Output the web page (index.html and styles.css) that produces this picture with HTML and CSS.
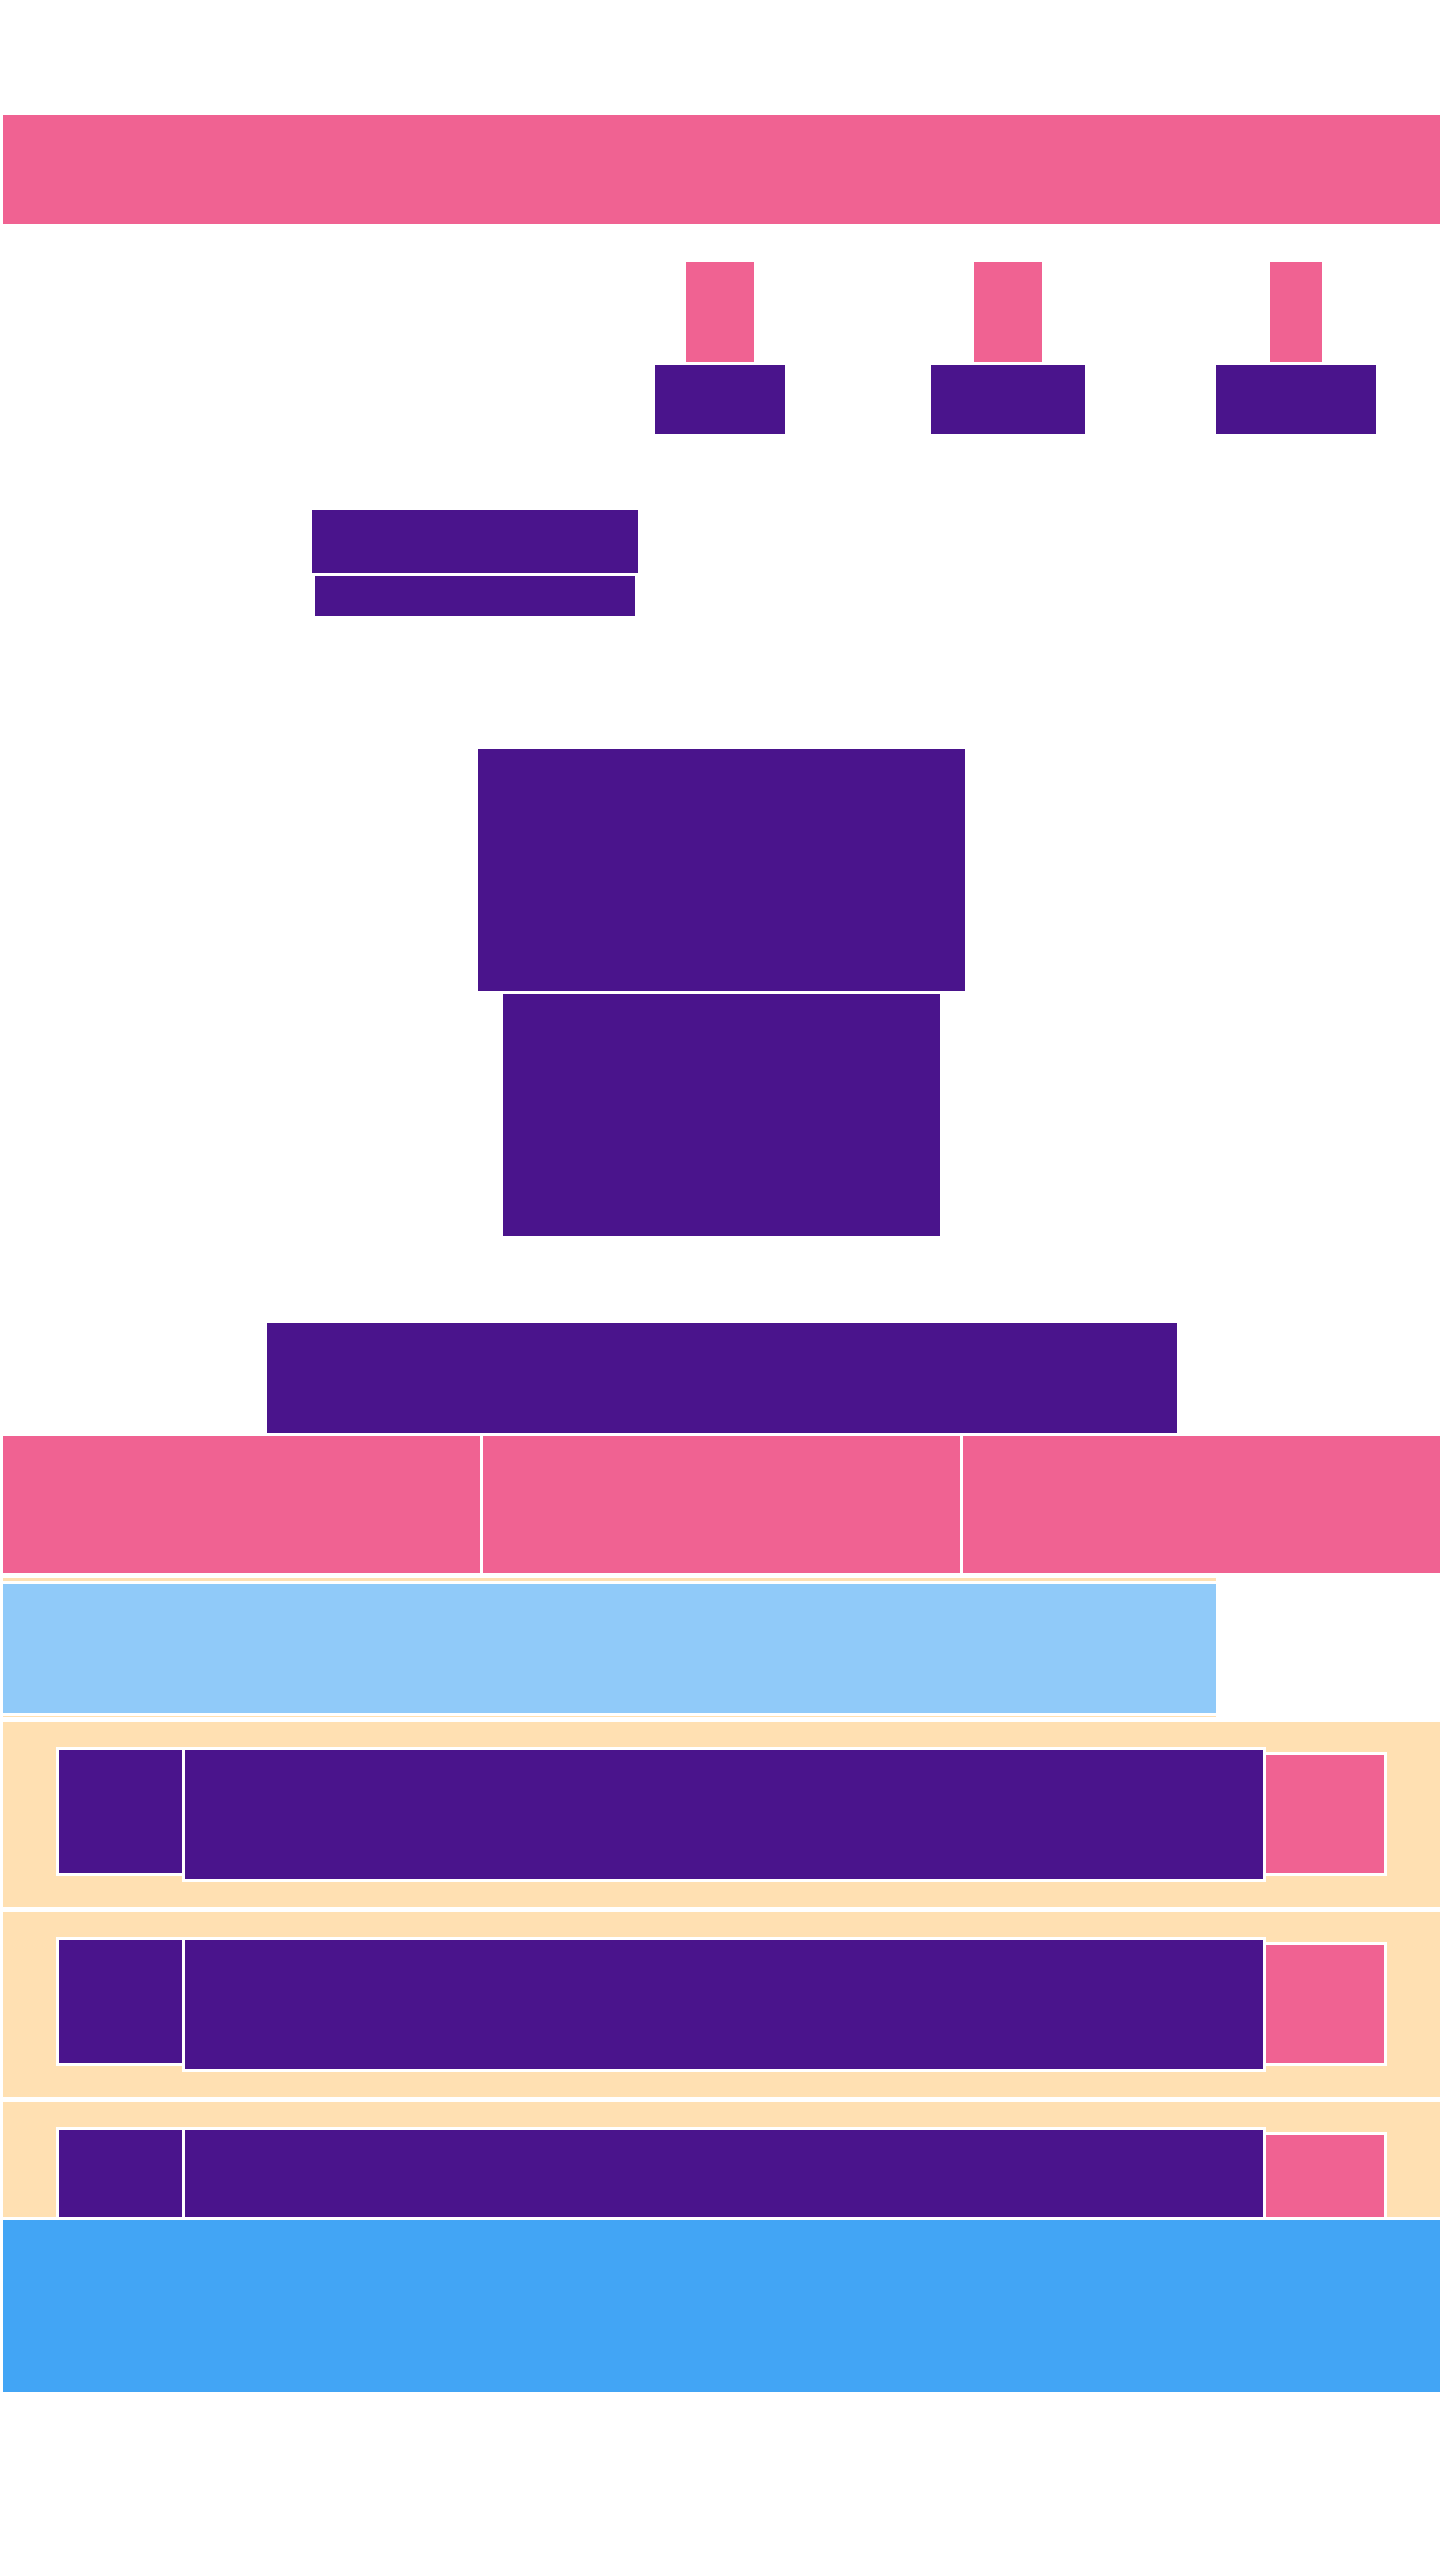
FILE: index.html
```html
<!DOCTYPE html>
<html lang="en">
<head>
  <meta charset="UTF-8">
  <meta name="viewport" content="width=device-width, initial-scale=1.0">
  <title>Layout</title>
  <link rel="stylesheet" href="styles.css">
</head>
<body>
  <header class="topbar"></header>

  <nav class="nav">
    <div class="nav-item">
      <div class="nav-icon icon-a"></div>
      <div class="nav-label label-a"></div>
    </div>
    <div class="nav-item">
      <div class="nav-icon icon-b"></div>
      <div class="nav-label label-b"></div>
    </div>
    <div class="nav-item">
      <div class="nav-icon icon-c"></div>
      <div class="nav-label label-c"></div>
    </div>
  </nav>

  <section class="intro">
    <div class="intro-title"></div>
    <div class="intro-sub"></div>
  </section>

  <section class="hero">
    <div class="hero-top"></div>
    <div class="hero-bottom"></div>
  </section>

  <div class="banner"></div>

  <section class="features">
    <div class="feature"></div>
    <div class="feature"></div>
    <div class="feature"></div>
  </section>

  <div class="rule rule-thick"></div>
  <div class="notice"></div>
  <div class="rule rule-thin"></div>

  <!-- lista cortada pelo rodapé -->
  <section class="list">
    <div class="row">
      <div class="row-thumb"></div>
      <div class="row-body"></div>
      <div class="row-action"></div>
    </div>
    <div class="row">
      <div class="row-thumb"></div>
      <div class="row-body"></div>
      <div class="row-action"></div>
    </div>
    <div class="row">
      <div class="row-thumb"></div>
      <div class="row-body"></div>
      <div class="row-action"></div>
    </div>
  </section>

  <footer class="footer"></footer>
</body>
</html>
```

FILE: styles.css
```css
body {
  margin: 0 0 0 3px;
  background: #ffffff;
  font-family: "Liberation Sans", Arial, sans-serif;
}

.topbar {
  margin-top: 115px;
  height: 109px;
  background: #f06292;
}

/* navegação */
.nav {
  display: grid;
  grid-template-columns: repeat(3, 288px);
  justify-content: end;
  margin-top: 38px;
}

.nav-item {
  display: flex;
  flex-direction: column;
  align-items: center;
  gap: 3px;
}

.nav-icon {
  height: 100px;
  background: #f06292;
}

.icon-a,
.icon-b { width: 68px; }
.icon-c { width: 52px; }

.nav-label {
  height: 69px;
  background: #4a148c;
}

.label-a { width: 130px; }
.label-b { width: 154px; }
.label-c { width: 160px; }

.intro {
  width: 944px;
  margin-top: 76px;
  display: flex;
  flex-direction: column;
  align-items: center;
  gap: 3px;
}

.intro-title {
  width: 326px;
  height: 63px;
  background: #4a148c;
}

.intro-sub {
  width: 320px;
  height: 40px;
  background: #4a148c;
}

.hero {
  margin-top: 133px;
  display: flex;
  flex-direction: column;
  align-items: center;
  gap: 3px;
}

.hero-top {
  width: 487px;
  height: 242px;
  background: #4a148c;
}

.hero-bottom {
  width: 437px;
  height: 242px;
  background: #4a148c;
}

.banner {
  width: 910px;
  height: 110px;
  margin: 87px auto 0;
  background: #4a148c;
}

.features {
  display: grid;
  grid-template-columns: repeat(3, 1fr);
  gap: 3px;
  margin-top: 3px;
}

.feature {
  height: 137px;
  background: #f06292;
}

.rule {
  width: 1213px;
  background: #ffe0b2;
}

.rule-thick {
  height: 3px;
  margin-top: 5px;
}

.rule-thin {
  height: 1px;
  margin-top: 3px;
}

.notice {
  width: 1213px;
  height: 129px;
  margin-top: 3px;
  background: #90caf9;
}

/* lista */
.list {
  height: 495px;
  margin-top: 5px;
  overflow: hidden;
  display: flex;
  flex-direction: column;
  gap: 5px;
}

.row {
  flex-shrink: 0;
  height: 135px;
  padding: 25px 0 25px 53px;
  display: flex;
  align-items: flex-start;
  background: #ffe0b2;
}

.row-thumb {
  width: 123px;
  height: 123px;
  border: 3px solid #ffffff;
  background: #4a148c;
}

.row-body {
  width: 1078px;
  height: 129px;
  margin-left: -3px;
  border: 3px solid #ffffff;
  background: #4a148c;
}

.row-action {
  width: 118px;
  height: 118px;
  margin: 5px 0 0 -3px;
  border: 3px solid #ffffff;
  background: #f06292;
}

.footer {
  height: 172px;
  margin-top: 3px;
  background: #42a5f5;
}
```
